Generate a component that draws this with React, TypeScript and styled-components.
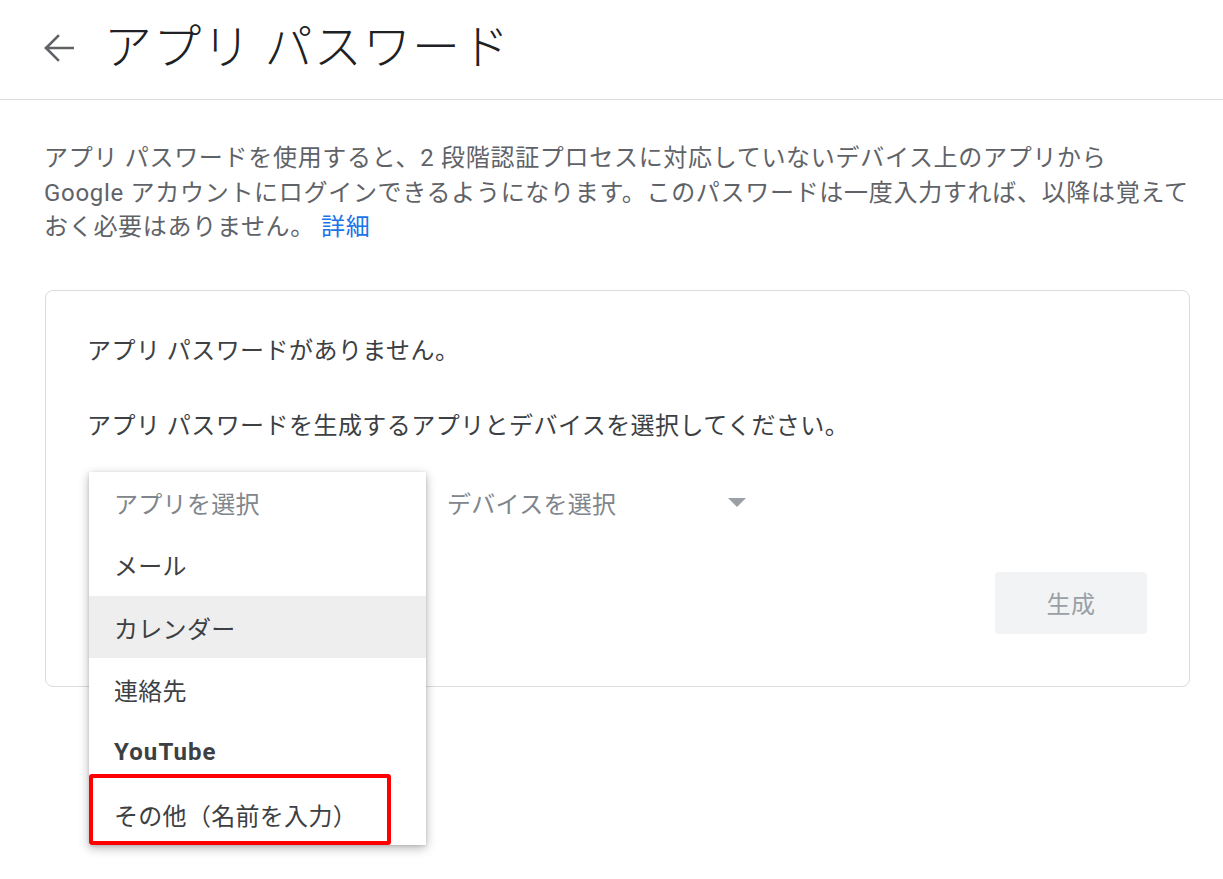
import React from "react";
import styled, { createGlobalStyle } from "styled-components";

const GlobalStyle = createGlobalStyle`
  html, body { margin: 0; padding: 0; background: #ffffff; }
  body {
    font-family: Roboto, "Noto Sans CJK JP", "Noto Sans", sans-serif;
    -webkit-font-smoothing: antialiased;
  }
  * { box-sizing: border-box; }
`;

const Page = styled.div`
  width: 1223px;
  min-height: 879px;
  background: #fff;
`;

const Header = styled.header`
  height: 100px;
  display: flex;
  align-items: center;
  gap: 30px;
  padding: 0 0 4px 44px;
  border-bottom: 1px solid #dadce0;
`;

const BackButton = styled.button`
  display: flex;
  align-items: center;
  justify-content: center;
  width: 30px;
  height: 30px;
  padding: 0;
  border: none;
  background: transparent;
  color: #5f6368;
  cursor: pointer;
`;

const Title = styled.h1`
  margin: 0;
  font-size: 48px;
  font-weight: 300;
  line-height: 56px;
  color: #202124;
  letter-spacing: 1.2px;
`;

const Content = styled.main`
  padding: 41px 0 0 44px;
`;

const Intro = styled.p`
  margin: 0;
  width: 1175px;
  font-size: 24px;
  line-height: 34.5px;
  letter-spacing: 0.7px;
  color: #5f6368;
`;

const Link = styled.a`
  color: #1a73e8;
  text-decoration: none;
  margin-left: 6px;
`;

const Card = styled.section`
  margin: 45px 0 0 1px;
  width: 1145px;
  border: 1px solid #dadce0;
  border-radius: 8px;
  padding: 43px 42px 52px 41px;
`;

const CardText = styled.p<{ $gap?: number }>`
  margin: 0 0 ${(p) => p.$gap ?? 0}px 0;
  font-size: 24px;
  line-height: 34px;
  letter-spacing: 0.45px;
  color: #3c4043;
`;

const SelectRow = styled.div`
  display: flex;
  align-items: center;
  height: 62px;
  margin-top: 29px;
  margin-left: 2px;
`;

const AppSelect = styled.div`
  position: relative;
  width: 337px;
  height: 62px;
`;

const Menu = styled.ul`
  position: absolute;
  top: 0;
  left: 0;
  width: 337px;
  margin: 0;
  padding: 0;
  list-style: none;
  background: #fff;
  box-shadow: 0 3px 10px rgba(0, 0, 0, 0.28), 0 1px 3px rgba(0, 0, 0, 0.12);
  z-index: 2;
`;

const MenuItem = styled.li<{ $placeholder?: boolean; $active?: boolean; $bold?: boolean }>`
  position: relative;
  height: 62.3px;
  display: flex;
  align-items: center;
  padding-left: 25px;
  font-size: 24px;
  font-weight: ${(p) => (p.$bold ? 700 : 400)};
  letter-spacing: ${(p) => (p.$bold ? "1.1px" : "0.3px")};
  color: ${(p) => (p.$placeholder ? "#80868b" : "#3c4043")};
  background: ${(p) => (p.$active ? "#eeeeee" : "transparent")};
`;

const Highlight = styled.span`
  position: absolute;
  left: 0;
  top: -9px;
  width: 302px;
  height: 71px;
  border: 4px solid #ff0000;
  border-radius: 3px;
  pointer-events: none;
`;

const DeviceSelect = styled.div`
  margin-left: 21px;
  width: 299px;
  display: flex;
  align-items: center;
  justify-content: space-between;
  font-size: 24px;
  letter-spacing: 0.3px;
  color: #80868b;
`;

const Caret = styled.span`
  width: 0;
  height: 0;
  border-left: 9px solid transparent;
  border-right: 9px solid transparent;
  border-top: 9px solid #9aa0a6;
`;

const Actions = styled.div`
  display: flex;
  justify-content: flex-end;
  margin-top: 38px;
`;

const GenerateButton = styled.button`
  width: 152px;
  height: 62px;
  border: none;
  border-radius: 4px;
  background: #f1f3f4;
  color: #9aa0a6;
  font-family: inherit;
  font-size: 24px;
  letter-spacing: 0.5px;
`;

export default function App() {
  return (
    <Page>
      <GlobalStyle />
      <Header>
        <BackButton aria-label="戻る">
          <svg width="30" height="30" viewBox="0 0 30 30" fill="none">
            <path
              d="M2 15 H29 M14 3 L2 15 L14 27"
              stroke="currentColor"
              strokeWidth="2.6"
              strokeLinecap="square"
              strokeLinejoin="miter"
            />
          </svg>
        </BackButton>
        <Title>アプリ パスワード</Title>
      </Header>
      <Content>
        <Intro>
          アプリ パスワードを使用すると、2 段階認証プロセスに対応していないデバイス上のアプリから
          <br />
          Google アカウントにログインできるようになります。このパスワードは一度入力すれば、以降は覚えて
          <br />
          おく必要はありません。<Link href="#">詳細</Link>
        </Intro>
        <Card>
          <CardText $gap={41}>アプリ パスワードがありません。</CardText>
          <CardText>アプリ パスワードを生成するアプリとデバイスを選択してください。</CardText>
          <SelectRow>
            <AppSelect>
              <Menu>
                <MenuItem $placeholder>アプリを選択</MenuItem>
                <MenuItem>メール</MenuItem>
                <MenuItem $active>カレンダー</MenuItem>
                <MenuItem>連絡先</MenuItem>
                <MenuItem $bold>YouTube</MenuItem>
                <MenuItem>
                  その他（名前を入力）
                  <Highlight />
                </MenuItem>
              </Menu>
            </AppSelect>
            <DeviceSelect>
              デバイスを選択
              <Caret />
            </DeviceSelect>
          </SelectRow>
          <Actions>
            <GenerateButton disabled>生成</GenerateButton>
          </Actions>
        </Card>
      </Content>
    </Page>
  );
}
